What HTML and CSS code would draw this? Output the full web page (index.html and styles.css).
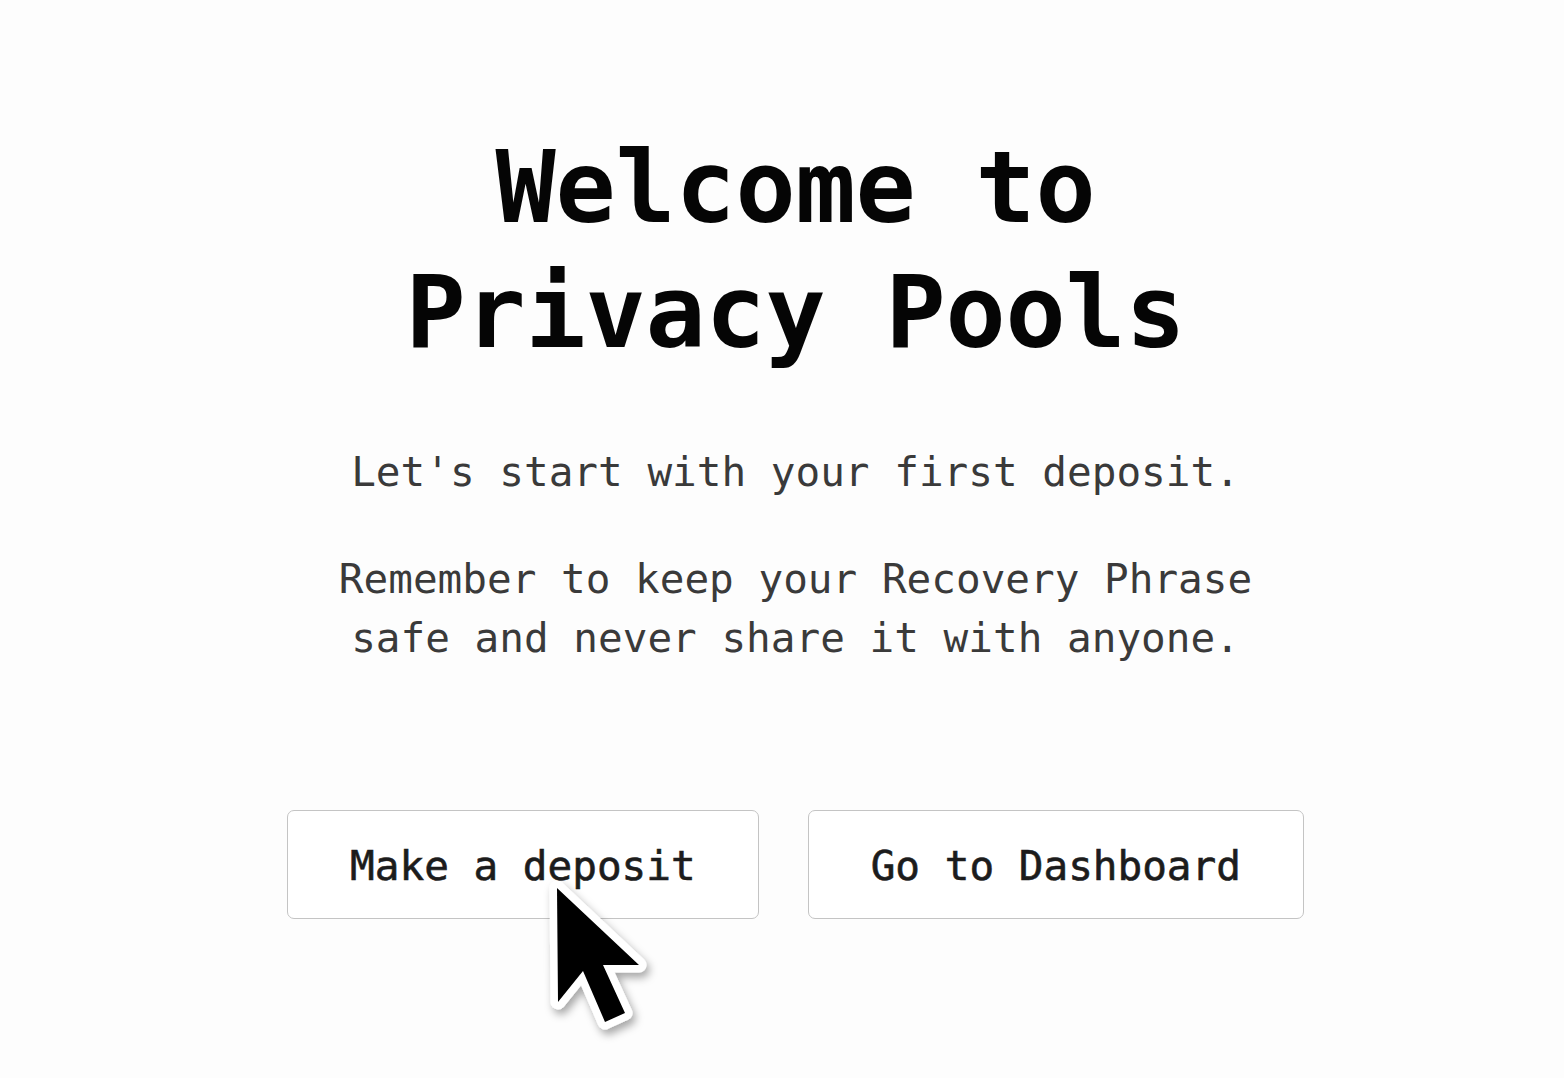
FILE: index.html
```html
<!DOCTYPE html>
<html lang="en">
<head>
<meta charset="utf-8">
<title>Welcome to Privacy Pools</title>
<link rel="stylesheet" href="styles.css">
</head>
<body>
<main class="welcome">
  <h1 class="title">Welcome to<br>Privacy Pools</h1>
  <p class="lead">Let's start with your first deposit.</p>
  <p class="note">Remember to keep your Recovery Phrase<br>safe and never share it with anyone.</p>
  <div class="actions">
    <button class="btn">Make a deposit</button>
    <button class="btn">Go to Dashboard</button>
  </div>
</main>
<svg class="cursor" width="120" height="180" viewBox="-15 -15 120 180" aria-hidden="true">
  <defs>
    <filter id="sh" x="-30%" y="-30%" width="160%" height="160%">
      <feDropShadow dx="3" dy="5" stdDeviation="4" flood-color="#000" flood-opacity="0.35"/>
    </filter>
  </defs>
  <path filter="url(#sh)" d="M0 0 L1 114 L26 83 L48 134 L68 125 L46 77 L82 77 Z" fill="#000" stroke="#fff" stroke-width="15" stroke-linejoin="round" paint-order="stroke"/>
</svg>
</body>
</html>
```

FILE: styles.css
```css
html, body {
  margin: 0;
  padding: 0;
  background: #fdfdfd;
}

body {
  width: 1564px;
  height: 1078px;
  overflow: hidden;
  position: relative;
  font-family: "DejaVu Sans Mono", "Liberation Mono", monospace;
}

.welcome {
  display: flex;
  flex-direction: column;
  align-items: center;
  padding-left: 27px;
  padding-top: 125px;
  text-align: center;
}

.title {
  margin: 0;
  font-size: 100px;
  line-height: 125px;
  font-weight: 700;
  color: #050505;
  letter-spacing: -0.2px;
}

.lead,
.note {
  margin: 0;
  font-size: 41px;
  line-height: 59px;
  color: #3a3a3a;
}

.lead {
  margin-top: 68px;
}

.note {
  margin-top: 48px;
}

.actions {
  display: flex;
  gap: 49px;
  margin-top: 142px;
}

.btn {
  font-family: inherit;
  font-size: 41px;
  line-height: 59px;
  color: #1c1c1c;
  -webkit-text-stroke: 0.6px #1c1c1c;
  background: #fff;
  border: 1.5px solid #c4c4c4;
  border-radius: 7px;
  padding: 26px 62px 22px;
  cursor: pointer;
}

.cursor {
  position: absolute;
  left: 542px;
  top: 873px;
}
```
